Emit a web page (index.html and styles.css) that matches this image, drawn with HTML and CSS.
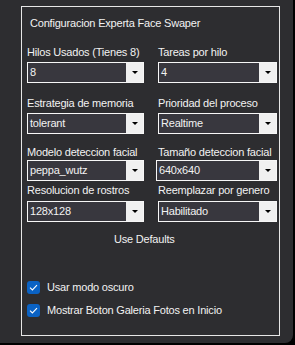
FILE: index.html
```html
<!DOCTYPE html>
<html lang="es">
<head>
  <meta charset="UTF-8">
  <title>Configuracion Experta Face Swaper</title>
  <link rel="stylesheet" href="styles.css">
</head>
<body>
  <div class="window">
    <section class="panel">
      <h1 class="panel-title">Configuracion Experta Face Swaper</h1>

      <div class="columns">
        <div class="column column-left">
          <label class="field-label row-1">Hilos Usados (Tienes 8)</label>
          <div class="combo combo-1"><span class="combo-value">8</span><span class="combo-btn"></span></div>

          <label class="field-label row-2">Estrategia de memoria</label>
          <div class="combo combo-2"><span class="combo-value">tolerant</span><span class="combo-btn"></span></div>

          <label class="field-label row-3">Modelo deteccion facial</label>
          <div class="combo combo-3"><span class="combo-value">peppa_wutz</span><span class="combo-btn"></span></div>

          <label class="field-label row-4">Resolucion de rostros</label>
          <div class="combo combo-4"><span class="combo-value">128x128</span><span class="combo-btn"></span></div>
        </div>

        <div class="column column-right">
          <label class="field-label row-1">Tareas por hilo</label>
          <div class="combo combo-1"><span class="combo-value">4</span><span class="combo-btn"></span></div>

          <label class="field-label row-2">Prioridad del proceso</label>
          <div class="combo combo-2"><span class="combo-value">Realtime</span><span class="combo-btn"></span></div>

          <label class="field-label row-3">Tamaño deteccion facial</label>
          <div class="combo combo-3 combo-shift"><span class="combo-value">640x640</span><span class="combo-btn"></span></div>

          <label class="field-label row-4">Reemplazar por genero</label>
          <div class="combo combo-4"><span class="combo-value">Habilitado</span><span class="combo-btn"></span></div>
        </div>
      </div>

      <div class="defaults-link">Use Defaults</div>

      <div class="check-list">
        <label class="check-row">
          <span class="check-box"><svg width="9" height="7" viewBox="0 0 9 7"><path d="M1 3.6 L3.4 6 L8 1.2" fill="none" stroke="#fff" stroke-width="1.1"/></svg></span>
          Usar modo oscuro
        </label>
        <label class="check-row">
          <span class="check-box"><svg width="9" height="7" viewBox="0 0 9 7"><path d="M1 3.6 L3.4 6 L8 1.2" fill="none" stroke="#fff" stroke-width="1.1"/></svg></span>
          Mostrar Boton Galeria Fotos en Inicio
        </label>
      </div>
    </section>
  </div>
</body>
</html>
```

FILE: styles.css
```css
/* ===== Base ===== */
:root {
  --window-bg: #2d2d30;
  --combo-bg: #38373e;
  --text: #f2f2f2;
  --line: #e6e6e6;
  --button: #f0f0f0;
  --accent: #0a62c4;
}

* {
  margin: 0;
  padding: 0;
  box-sizing: border-box;
}

body {
  background: #000;
  font-family: "Liberation Sans", Arial, sans-serif;
  font-size: 11px;
  line-height: 13px;
  letter-spacing: -0.2px;
  color: var(--text);
}

/* ===== Window ===== */
.window {
  width: 293px;
  height: 343px;
  background: var(--window-bg);
  border-bottom-right-radius: 8px;
  padding: 6px 0 0 21px;
}

.panel {
  width: 259px;
  height: 330px;
  border: 1px solid var(--line);
  padding-left: 5px;
}

.panel-title {
  font-size: 11px;
  font-weight: normal;
  margin-top: 10px;
  padding-left: 3px;
}

/* ===== Fields ===== */
.columns {
  display: flex;
  gap: 14px;
}

.column {
  display: flex;
  flex-direction: column;
}

.column-left { width: 117px; }
.column-right { width: 119px; }

.field-label { display: block; white-space: nowrap; }
.row-1 { margin-top: 16px; }
.row-2 { margin-top: 14px; }
.row-3 { margin-top: 12px; }
.row-4 { margin-top: 3px; }

.combo {
  display: flex;
  height: 21px;
  border: 1px solid #f7f7f7;
  background: var(--combo-bg);
}

.combo-1, .combo-2 { margin-top: 3px; }
.combo-3 { margin-top: 1px; }
.combo-4 { margin-top: 4px; }
.combo-shift { margin-left: -2px; }

.combo-value {
  flex: 1;
  padding-left: 2px;
  line-height: 18px;
  white-space: nowrap;
}

.combo-btn {
  width: 17px;
  background: var(--button);
  display: flex;
  align-items: center;
  justify-content: center;
}

.combo-btn::after {
  content: "";
  border-left: 3px solid transparent;
  border-right: 3px solid transparent;
  border-top: 3px solid #000;
}

/* ===== Bottom ===== */
.defaults-link {
  margin: 11px 0 0 87px;
}

.check-list {
  display: flex;
  flex-direction: column;
  gap: 10px;
  margin-top: 35px;
}

.check-row {
  display: flex;
  align-items: center;
  gap: 7px;
  height: 13px;
}

.check-box {
  width: 13px;
  height: 13px;
  border-radius: 3px;
  background: var(--accent);
  display: flex;
  align-items: center;
  justify-content: center;
}
```
